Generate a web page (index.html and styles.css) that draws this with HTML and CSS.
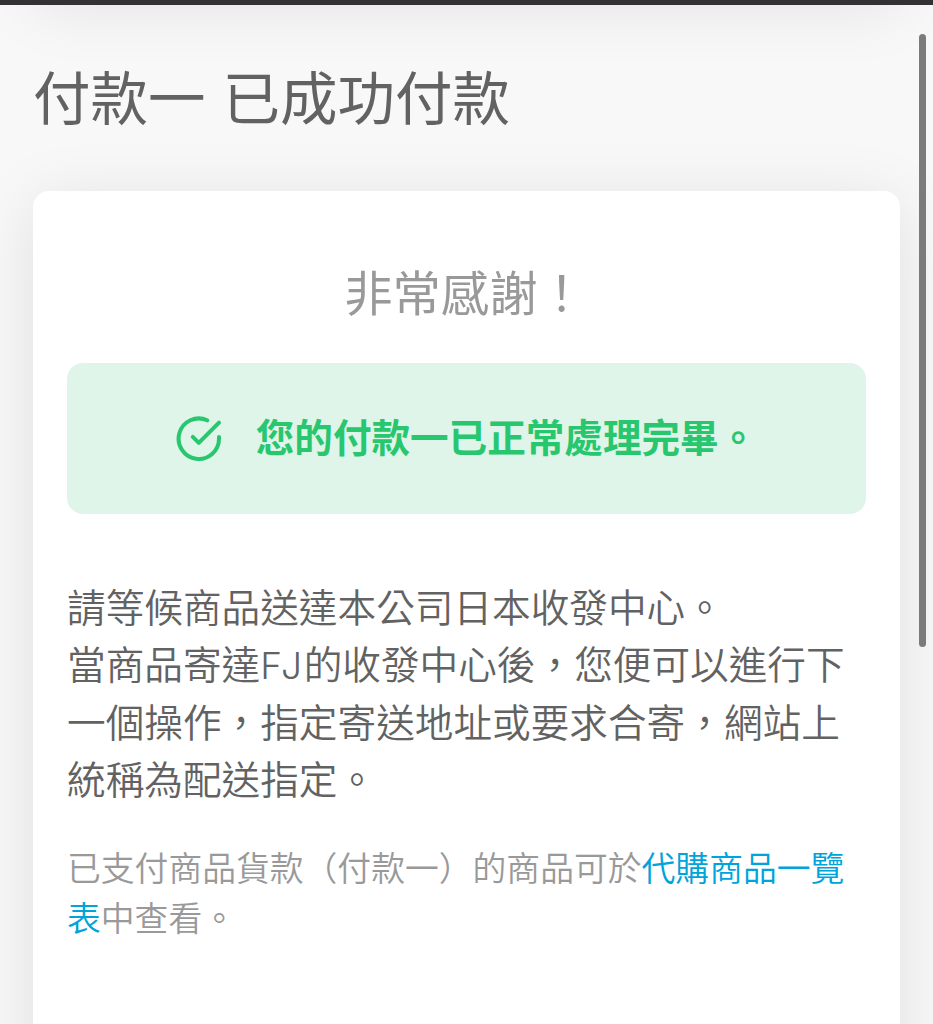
FILE: index.html
```html
<!DOCTYPE html>
<html lang="zh-Hant">
	<head>
		<meta charset="UTF-8">
		<title>付款一 已成功付款</title>
		<link rel="stylesheet" href="styles.css">
	</head>
	<body>
		<div class="shade"></div>
		<div class="topbar"></div>
		<main class="page">
			<h1 class="title">付款一 已成功付款</h1>
			<section class="card">
				<h2 class="thanks">非常感謝！</h2>
				<div class="alert">
					<svg class="check" viewBox="0 0 46 46" width="46" height="46">
						<path d="M43 21v1.6A20.2 20.2 0 1 1 31.2 4.3"/>
						<path d="M43 6.6L22.8 26.8l-6-6"/>
					</svg>
					<span class="message">您的付款一已正常處理完畢。</span>
				</div>
				<p class="info">請等候商品送達本公司日本收發中心。<br>當商品寄達<span class="latin">FJ</span>的收發中心後，您便可以進行下<br>一個操作，指定寄送地址或要求合寄，網站上<br>統稱為配送指定。</p>
				<p class="note">已支付商品貨款（付款一）的商品可於<a class="link" href="#">代購商品一覽<br>表</a>中查看。</p>
			</section>
		</main>
		<div class="scrollbar"></div>
	</body>
</html>
```

FILE: styles.css
```css
* {
	box-sizing: border-box;
}

body {
	position: relative;
	margin: 0;
	height: 1024px;
	overflow: hidden;
	background-color: #f8f8f8;
	color: #626262;
	font-family: "Noto Sans CJK TC", sans-serif;
}

/* shadow of the navbar that floats above the page */
.shade {
	position: absolute;
	top: -170px;
	left: 33px;
	right: 33px;
	height: 166px;
	box-shadow: 0 11px 67px rgba(0, 0, 0, 0.09);
}

.topbar {
	position: relative;
	height: 5px;
	background-color: #333133;
}

.page {
	position: relative;
	height: 1019px;
	padding: 52px 33px 0 33px;
	overflow: hidden;
}

.title {
	margin: 0 0 58px 0;
	height: 76px;
	line-height: 76px;
	font-size: 57.5px;
	font-weight: 400;
	word-spacing: 4px;
	white-space: nowrap;
}

/* tall enough for its bottom edge to stay below the fold */
.card {
	height: 960px;
	padding: 68px 34px;
	background-color: white;
	border-radius: 16px;
	box-shadow: 0 11px 67px rgba(0, 0, 0, 0.1);
}

.thanks {
	margin: -5px 3px 5px 0;
	height: 104px;
	line-height: 72px;
	font-size: 48.3px;
	font-weight: 400;
	color: #999999;
	text-align: center;
}

.alert {
	display: flex;
	align-items: center;
	justify-content: center;
	gap: 34px;
	height: 151px;
	background-color: #dff5e9;
	border-radius: 16px;
	color: #28c76f;
	font-size: 38.6px;
	font-weight: 700;
	white-space: nowrap;
}

.message {
	margin-top: -8px;
}

.check {
	fill: none;
	stroke: #28c76f;
	stroke-width: 4;
	stroke-linecap: round;
	stroke-linejoin: round;
}

.info {
	margin: 63px 0 0 0;
	line-height: 57.3px;
	font-size: 38.65px;
	font-weight: 350;
	white-space: nowrap;
}

.latin {
	font-family: Inter, sans-serif;
	font-size: 37px;
	font-weight: 300;
	line-height: 1;
	letter-spacing: 1.6px;
}

.note {
	margin: 36px 0 0 0;
	line-height: 50px;
	font-size: 33.8px;
	font-weight: 350;
	color: #999999;
	white-space: nowrap;
}

.link {
	color: #00a3da;
	text-decoration: none;
}

.scrollbar {
	position: absolute;
	top: 34px;
	right: 7px;
	width: 7px;
	height: 613px;
	border-radius: 4px;
	background-color: #7b7b7b;
}
```
